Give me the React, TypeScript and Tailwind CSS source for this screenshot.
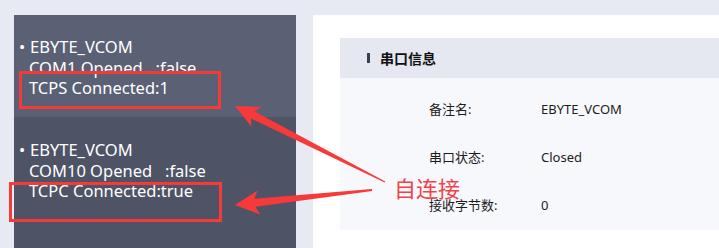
import React from 'react';

const font = { fontFamily: '"Noto Sans", "Noto Sans CJK SC", sans-serif' };

function PortItem({ name, line2, line3 }: { name: string; line2: string; line3: string }) {
  return (
    <div className="flex text-white text-[16.5px] leading-[20.5px]">
      <span className="w-[15px] pl-[5px] shrink-0">•</span>
      <div className="whitespace-pre">
        <div className="pl-[1px]">{name}</div>
        <div>{line2}</div>
        <div>{line3}</div>
      </div>
    </div>
  );
}

function InfoRow({ label, value }: { label: string; value: string }) {
  return (
    <div className="flex items-center h-[48px] text-[13px] text-[#1c1c1c]">
      <div className="w-[112px] pl-[89px] box-content shrink-0 whitespace-nowrap">{label}</div>
      <div>{value}</div>
    </div>
  );
}

export default function App() {
  return (
    <div className="relative w-[719px] h-[248px] overflow-hidden bg-[#e8eaf3]" style={font}>
      <div className="flex h-full pt-[15px] pl-[14px] gap-[17px]">
        {/* left list */}
        <div className="w-[282px] shrink-0 flex flex-col">
          <div className="h-[102px] bg-[#5a6175] pt-[22px]">
            <PortItem name="EBYTE_VCOM" line2="COM1 Opened   :false" line3="TCPS Connected:1" />
          </div>
          <div className="flex-1 bg-[#4e5466] pt-[23px]">
            <PortItem name="EBYTE_VCOM" line2="COM10 Opened   :false" line3="TCPC Connected:true" />
          </div>
        </div>

        {/* right content */}
        <div className="flex-1 bg-white pt-[23px] pl-[27px]">
          <div className="h-[40px] bg-[#e6e8f1] flex items-center pl-[27px] gap-[10px]">
            <span className="w-[3px] h-[10px] bg-[#3b3f4c]" />
            <span className="text-[14px] font-bold text-[#111]">串口信息</span>
          </div>
          <div className="h-[152px] bg-[#f7f8fc] pt-[8px]">
            <InfoRow label="备注名:" value="EBYTE_VCOM" />
            <InfoRow label="串口状态:" value="Closed" />
            <InfoRow label="接收字节数:" value="0" />
          </div>
        </div>
      </div>

      {/* annotations */}
      <div className="absolute left-[19px] top-[71px] w-[202px] h-[38px] border-[3px] border-[#f83939]" />
      <div className="absolute left-[9px] top-[182px] w-[213px] h-[40px] border-[3px] border-[#f83939]" />
      <svg className="absolute left-0 top-0" width="719" height="248" viewBox="0 0 719 248">
        <polygon
          fill="#f83939"
          points="235,106 261.4,107 254.6,111.4 385.3,181.4 384.7,182.6 251,118.6 251.4,126.6"
        />
        <polygon
          fill="#f83939"
          points="235,205 257.5,190.5 254.5,198.8 371.9,189.1 372.1,190.9 255.3,206.8 260.3,214.5"
        />
      </svg>
      <div className="absolute left-[394px] top-[175px] text-[22px] leading-[26px] text-[#f0424a]">自连接</div>
    </div>
  );
}
